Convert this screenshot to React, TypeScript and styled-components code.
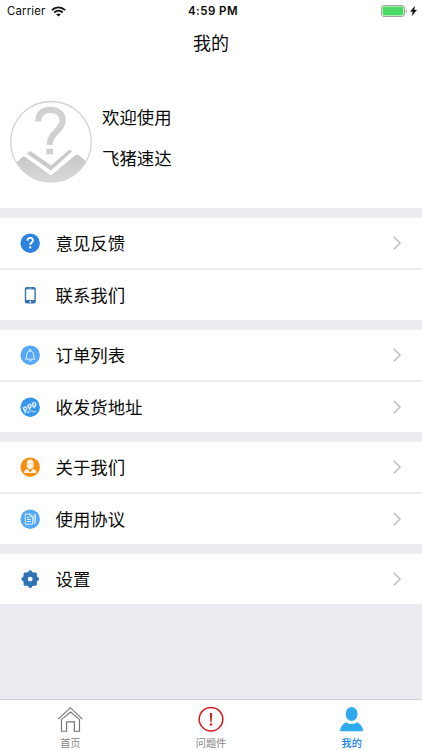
import React from "react";
import styled, { createGlobalStyle } from "styled-components";

const GlobalStyle = createGlobalStyle`
  * { box-sizing: border-box; }
  body {
    margin: 0;
    background: #ebebf1;
    color: #0a0a0a;
    font-family: Inter, "Noto Sans CJK SC", sans-serif;
  }
  svg { display: block; flex: none; }
`;

const Screen = styled.div`
  display: flex;
  flex-direction: column;
  width: 422px;
  height: 750px;
  overflow: hidden;
  background: #ebebf1;
`;

const StatusBar = styled.div`
  display: grid;
  grid-template-columns: 1fr auto 1fr;
  align-items: center;
  height: 22px;
  padding: 0 5px 0 7px;
  background: #fff;
  font-size: 11.4px;
  line-height: 22px;
`;

const StatusSide = styled.div<{ $end?: boolean }>`
  display: flex;
  align-items: center;
  gap: ${(p) => (p.$end ? 3 : 6)}px;
  justify-content: ${(p) => (p.$end ? "flex-end" : "flex-start")};
  letter-spacing: 0.15px;
`;

const Clock = styled.div`
  padding-left: 2px;
  font-weight: 600;
  font-size: 11.5px;
  letter-spacing: 0.45px;
`;

const NavBar = styled.header`
  height: 42px;
  padding-top: 1px;
  background: #fff;
  text-align: center;
  font-size: 18px;
  line-height: 42px;
`;

const Profile = styled.section`
  display: flex;
  height: 144px;
  padding: 36px 10px 0;
  gap: 10px;
  background: #fff;
`;

const Greeting = styled.div`
  display: flex;
  flex-direction: column;
  gap: 17px;
  padding-top: 5.5px;
  font-size: 17.4px;
  line-height: 24px;
`;

const Group = styled.section`
  display: flex;
  flex-direction: column;
  gap: 2px;
  margin-top: 10px;
`;

const Row = styled.div`
  display: flex;
  align-items: center;
  height: 50px;
  padding: 0 19px 0 20px;
  background: #fff;
`;

const RowLabel = styled.span`
  flex: 1;
  margin-left: 15.5px;
  padding-top: 2px;
  font-size: 17.4px;
  line-height: 48px;
`;

const TabBar = styled.nav`
  display: grid;
  grid-template-columns: repeat(3, 1fr);
  height: 51px;
  margin-top: auto;
  border-top: 1px solid #cfcfd4;
  background: #fff;
`;

const Tab = styled.div<{ $active?: boolean }>`
  display: flex;
  flex-direction: column;
  align-items: center;
  padding-top: 6px;
  gap: 3px;
  font-size: 10.2px;
  line-height: 15px;
  font-weight: ${(p) => (p.$active ? 500 : 400)};
  color: ${(p) => (p.$active ? "#1580e4" : "#858585")};
`;

const Wifi = () => (
  <svg width="15" height="11" viewBox="0 0 15 11" fill="none" stroke="#111" strokeWidth="1.9">
    <path d="M.9 4.1C4.7.4 10.3.4 14.1 4.1M3.3 6.5c2.5-2.3 5.9-2.3 8.4 0" />
    <path d="M5.2 8.3Q7.5 6.5 9.8 8.3L7.5 10.6Z" fill="#111" stroke="none" />
  </svg>
);

const Battery = () => (
  <svg width="26" height="12" viewBox="0 0 26 12">
    <rect x=".5" y=".5" width="23" height="11" rx="2.5" fill="#fff" stroke="#a2a2a2" />
    <rect x="1.6" y="1.6" width="20.8" height="8.8" rx="1.4" fill="#4cd964" />
    <path d="M24.7 4v4q1.1-.6 1.1-2t-1.1-2" fill="#999" />
  </svg>
);

const Bolt = () => (
  <svg width="7" height="10" viewBox="0 0 7 10">
    <path d="M4.7.2.4 5.5h2.4L2 9.8 6.7 4.1H4.1Z" fill="#111" stroke="#111" strokeWidth=".3" />
  </svg>
);

const Avatar = () => (
  <svg width="82" height="83" viewBox="0 0 82 83">
    <defs>
      <linearGradient id="fold" x1="0" y1="0" x2="0" y2="1">
        <stop offset="0" stopColor="#c6c6c6" />
        <stop offset="1" stopColor="#dadada" />
      </linearGradient>
      <clipPath id="disc"><circle cx="41" cy="41.8" r="40.2" /></clipPath>
    </defs>
    <path d="M0 68 12.5 57Q14 56 16 57.5L41 75.5 65 55.5Q67 54 69 55.5L82 66V83H0Z" fill="url(#fold)" clipPath="url(#disc)" />
    <path d="M16.7 53.5 20.5 51 41 65.5 59.5 49.5 62 51.5 41 70.5Z" fill="#cbcbcb" />
    <path d="M28.3 21.5C28.3 13 33.5 9.8 40.5 9.8 48 9.8 52.6 13.7 52.6 20.5 52.6 31 39.7 32 39.7 45" fill="none" stroke="#d1d1d1" strokeWidth="6.2" />
    <rect x="36.4" y="48.7" width="6.6" height="5.6" fill="#cecece" />
    <circle cx="41" cy="41.8" r="40.3" fill="none" stroke="#d3d3d3" strokeWidth="1.3" />
  </svg>
);

const Chevron = () => (
  <svg width="12" height="16" viewBox="0 0 12 16" fill="none" stroke="#c5c5ca" strokeWidth="1.7">
    <path d="m2.8 1.9 6.2 6.2-6.2 6.2" />
  </svg>
);

type IconName = "help" | "phone" | "bell" | "map" | "person" | "document" | "gear";

const teeth = [0, 45, 90, 135, 180, 225, 270, 315];

const glyphs: Record<IconName, React.ReactNode> = {
  help: (
    <>
      <circle cx="10.2" cy="10.2" r="9.7" fill="#2b82df" />
      <path d="M7.4 7.8C7.4 4 13 4 13 7.3 13 9.5 10.2 9.4 10.2 12.1" fill="none" stroke="#fff" strokeWidth="1.9" />
      <rect x="9.2" y="13.3" width="2" height="2" fill="#fff" />
    </>
  ),
  phone: (
    <>
      <rect x="4.8" y="2" width="11" height="16.6" rx="2" fill="#3472b1" />
      <rect x="6.2" y="4.4" width="8.2" height="10.6" fill="#fff" />
      <path d="M8.5 3.2h3.4" stroke="#b8d2ec" strokeWidth=".6" />
      <circle cx="10.3" cy="16.7" r=".9" fill="#fff" />
    </>
  ),
  bell: (
    <>
      <circle cx="10.2" cy="10.2" r="9.7" fill="#55a7f8" />
      <path d="M5.3 14.1c1.5-1 1.3-2.4 1.5-4.5.2-2.1 1.3-3.5 3.4-3.5s3.2 1.4 3.4 3.5c.2 2.1 0 3.5 1.5 4.5ZM9.3 6V4.7H11V6M8.7 15.5q1.5 1.1 3 0" fill="none" stroke="#eef8ff" strokeWidth=".9" />
    </>
  ),
  map: (
    <>
      <circle cx="10.2" cy="10.2" r="9.7" fill="#3496f1" />
      <path d="m4.2 16.6 1.5-1.7 3 .9 2.5-2.2 2.3 1.2h2.7M9.2 13.4l-1.6 2" fill="none" stroke="#e4f3ff" strokeWidth=".8" />
      <path d="M5.1 15.1c-2.7-3.3-2.6-5.5 0-5.6 2.6.1 2.7 2.3 0 5.6ZM9.6 12.7c-2.7-3.3-2.6-5.6 0-5.7 2.6.1 2.7 2.4 0 5.7ZM14.1 11.2c-2.8-3.4-2.7-5.9 0-6 2.7.1 2.8 2.6 0 6Z" fill="#cce8ff" stroke="#fff" strokeWidth=".5" />
      <g fill="#3496f1"><circle cx="5.1" cy="11.6" r=".8" /><circle cx="9.6" cy="9.1" r=".8" /><circle cx="14.1" cy="7.4" r=".9" /></g>
    </>
  ),
  person: (
    <>
      <circle cx="10.2" cy="10.2" r="9.7" fill="#f98d0e" />
      <path d="M3.9 15.9q0-3.1 3.8-4.1l2.5 3.2 2.5-3.2q3.8 1 3.8 4.1Z" fill="#fff2df" />
      <path d="M6.8 9.2V5.7q.4-3.1 3.4-3.1t3.4 3.1v3.5q-.4 2.7-3.4 3-3-.3-3.4-3Z" fill="#fff4e5" />
      <path d="M7.8 7.4q2 0 3.4-1.2l1.4 1.2" fill="none" stroke="#f9b65f" strokeWidth=".6" />
      <path d="m8.3 12 1.9 2.9 1.9-2.9" fill="none" stroke="#f98d0e" strokeWidth=".8" />
    </>
  ),
  document: (
    <>
      <circle cx="10.2" cy="10.2" r="9.7" fill="#55a7f8" />
      <path d="M5.3 5h5l2.3 2.4v7.8H5.3ZM10.2 5v2.6h2.3M7 8.6h2.4M7 10.5h3.9M7 12.5h3.9M14 5.5h1.4v7.7l-.7 1.7-.7-1.7Z" fill="none" stroke="#f2faff" strokeWidth=".85" />
    </>
  ),
  gear: (
    <>
      <circle cx="10.2" cy="10.1" r="4.9" fill="none" stroke="#3073b4" strokeWidth="5" />
      {teeth.map((angle) => (
        <circle key={angle} cx="10.2" cy="3.3" r="2" fill="#3073b4" transform={`rotate(${angle} 10.2 10.1)`} />
      ))}
    </>
  ),
};

const RowIcon = ({ name }: { name: IconName }) => (
  <svg width="20" height="20" viewBox="0 0 20 20">{glyphs[name]}</svg>
);

const HomeIcon = () => (
  <svg width="26" height="27" viewBox="0 0 26 27" fill="none" stroke="#747474" strokeWidth="1.15">
    <path d="M1.2 13.1 13.3 1.7l12.1 11.4M4.5 13.4v11.8h5.1v-9.4h7.8v9.4h5.1V13.4L13.5 6Z" />
  </svg>
);

const AlertIcon = () => (
  <svg width="26" height="27" viewBox="0 0 26 27">
    <circle cx="13" cy="13.2" r="11.8" fill="none" stroke="#d61c23" strokeWidth="1.5" />
    <path d="M11.8 7h2.4l-.6 9.2h-1.2Z" fill="#d61c23" />
    <circle cx="13" cy="18.5" r="1.2" fill="#d61c23" />
  </svg>
);

const UserIcon = () => (
  <svg width="26" height="27" viewBox="0 0 26 27" fill="#2faaed">
    <ellipse cx="12.6" cy="8" rx="5.9" ry="6.9" />
    <path d="M1.1 24.8q.1-5.6 6-8.6 5.5 3.8 11 0 5.9 3.2 6 8.6-.1.5-1.1.5H2.2q-1 0-1.1-.5Z" />
  </svg>
);

const groups: { label: string; icon: IconName; plain?: boolean }[][] = [
  [{ label: "意见反馈", icon: "help" }, { label: "联系我们", icon: "phone", plain: true }],
  [{ label: "订单列表", icon: "bell" }, { label: "收发货地址", icon: "map" }],
  [{ label: "关于我们", icon: "person" }, { label: "使用协议", icon: "document" }],
  [{ label: "设置", icon: "gear" }],
];

export default function App() {
  return (
    <Screen>
      <GlobalStyle />
      <StatusBar>
        <StatusSide>Carrier<Wifi /></StatusSide>
        <Clock>4:59 PM</Clock>
        <StatusSide $end><Battery /><Bolt /></StatusSide>
      </StatusBar>
      <NavBar>我的</NavBar>
      <Profile>
        <Avatar />
        <Greeting>
          <span>欢迎使用</span>
          <span>飞猪速达</span>
        </Greeting>
      </Profile>
      {groups.map((rows) => (
        <Group key={rows[0].label}>
          {rows.map((row) => (
            <Row key={row.label}>
              <RowIcon name={row.icon} />
              <RowLabel>{row.label}</RowLabel>
              {!row.plain && <Chevron />}
            </Row>
          ))}
        </Group>
      ))}
      <TabBar>
        <Tab><HomeIcon />首页</Tab>
        <Tab><AlertIcon />问题件</Tab>
        <Tab $active><UserIcon />我的</Tab>
      </TabBar>
    </Screen>
  );
}
